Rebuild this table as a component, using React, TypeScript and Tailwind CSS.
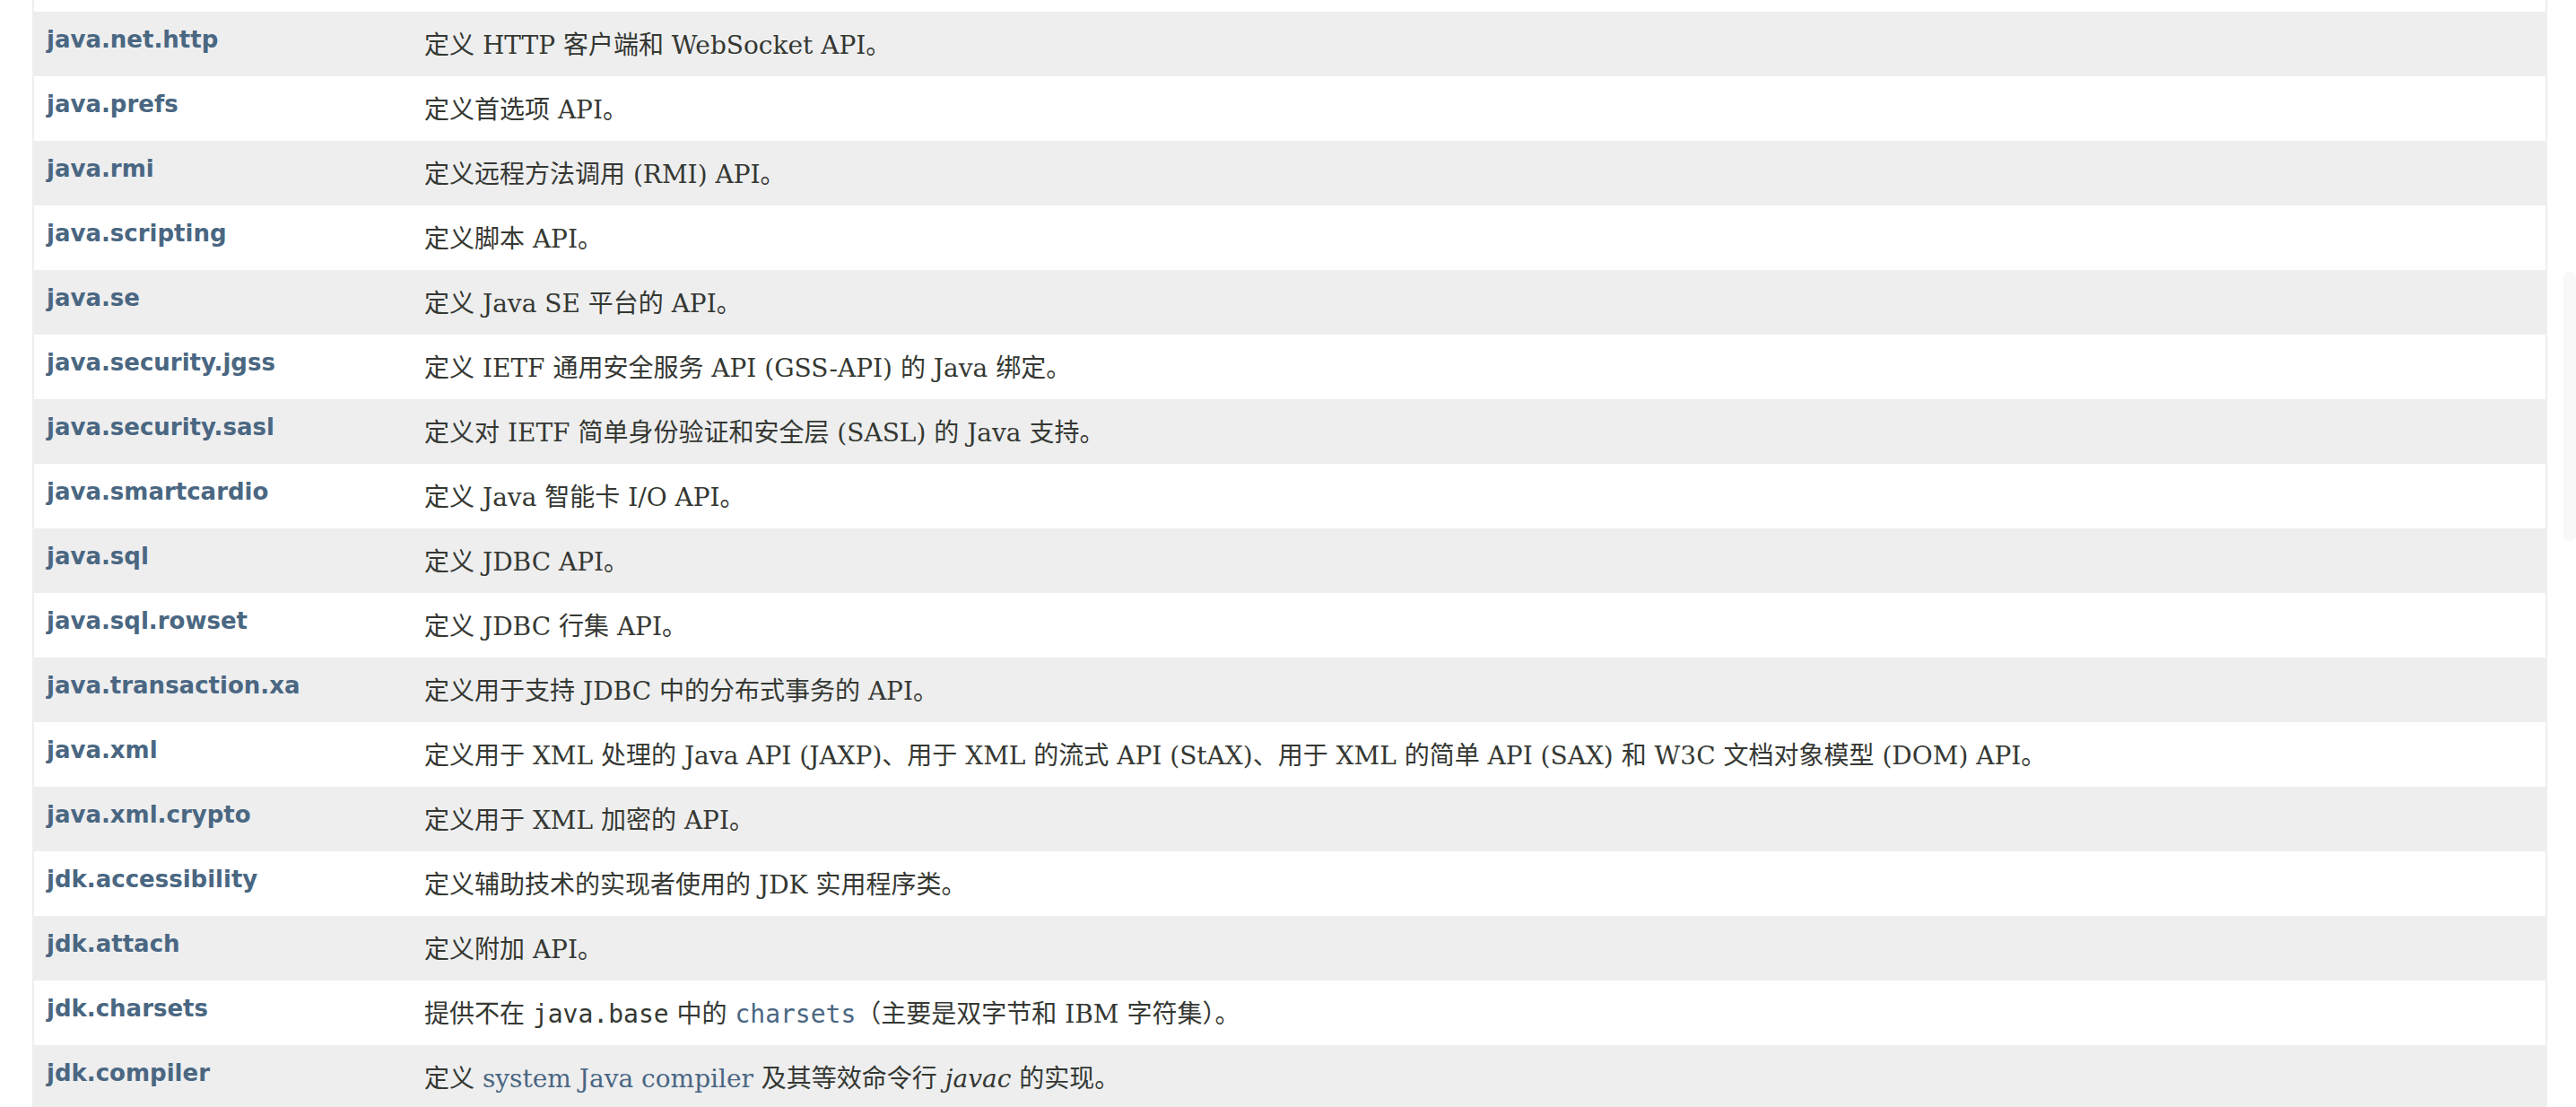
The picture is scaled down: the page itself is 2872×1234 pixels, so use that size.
import React from 'react';

type Row = { name: string; desc: React.ReactNode };

const code = 'font-["DejaVu_Sans_Mono","Liberation_Mono",monospace] text-[28px]';
const link = 'text-[#4a6782]';

const rows: Row[] = [
    { name: 'java.net.http', desc: '定义 HTTP 客户端和 WebSocket API。' },
    { name: 'java.prefs', desc: '定义首选项 API。' },
    { name: 'java.rmi', desc: '定义远程方法调用 (RMI) API。' },
    { name: 'java.scripting', desc: '定义脚本 API。' },
    { name: 'java.se', desc: '定义 Java SE 平台的 API。' },
    { name: 'java.security.jgss', desc: '定义 IETF 通用安全服务 API (GSS-API) 的 Java 绑定。' },
    { name: 'java.security.sasl', desc: '定义对 IETF 简单身份验证和安全层 (SASL) 的 Java 支持。' },
    { name: 'java.smartcardio', desc: '定义 Java 智能卡 I/O API。' },
    { name: 'java.sql', desc: '定义 JDBC API。' },
    { name: 'java.sql.rowset', desc: '定义 JDBC 行集 API。' },
    { name: 'java.transaction.xa', desc: '定义用于支持 JDBC 中的分布式事务的 API。' },
    { name: 'java.xml', desc: '定义用于 XML 处理的 Java API (JAXP)、用于 XML 的流式 API (StAX)、用于 XML 的简单 API (SAX) 和 W3C 文档对象模型 (DOM) API。' },
    { name: 'java.xml.crypto', desc: '定义用于 XML 加密的 API。' },
    { name: 'jdk.accessibility', desc: '定义辅助技术的实现者使用的 JDK 实用程序类。' },
    { name: 'jdk.attach', desc: '定义附加 API。' },
    {
        name: 'jdk.charsets',
        desc: (
            <>
                提供不在 <code className={code}>java.base</code> 中的 <code className={`${code} ${link}`}>charsets</code>（主要是双字节和 IBM 字符集）。
            </>
        ),
    },
    {
        name: 'jdk.compiler',
        desc: (
            <>
                定义 <a className={link}>system Java compiler</a> 及其等效命令行 <em>javac</em> 的实现。
            </>
        ),
    },
];

export default function App() {
    return (
        <div className="relative h-[1234px] overflow-hidden bg-white pl-9 pr-8">
            <div className="border-x-2 border-[#eeeeef]">
                {/* bottom of the row scrolled out above */}
                <div className="h-[13px] bg-white" />
                {rows.map((row, i) => (
                    <div
                        key={row.name}
                        className={`grid h-[72px] grid-cols-[421px_1fr] ${i % 2 === 0 ? 'bg-[#eeeeef]' : 'bg-white'}`}
                    >
                        <div className="pl-[14px] pt-[13px] font-['DejaVu_Sans',sans-serif] text-[26px] font-bold leading-[36px] text-[#4a6782]">
                            {row.name}
                        </div>
                        <div className="pl-[14px] pt-[18px] font-['DejaVu_Serif','Noto_Sans_CJK_SC',serif] text-[28px] leading-[39px] text-[#353833]">
                            {row.desc}
                        </div>
                    </div>
                ))}
            </div>
            {/* faint overlay scrollbar */}
            <div className="absolute right-0 top-[303px] h-[300px] w-[14px] rounded-full bg-[#f8f8f8]" />
        </div>
    );
}
